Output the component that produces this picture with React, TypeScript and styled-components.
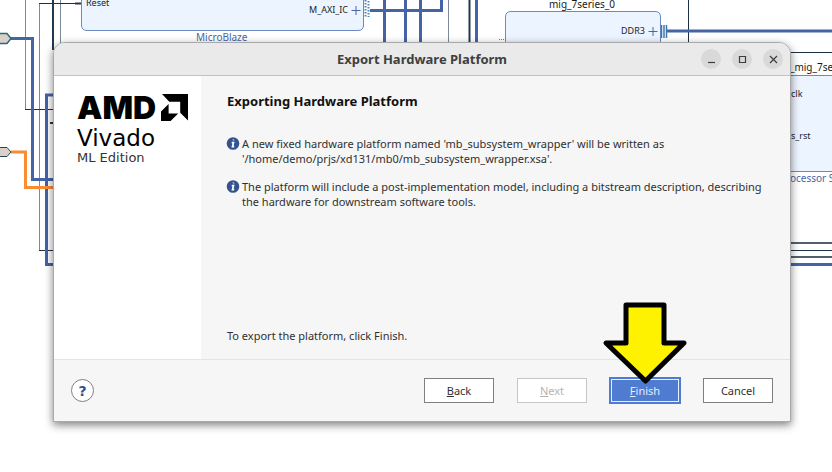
import React from "react";
import styled, { createGlobalStyle, css } from "styled-components";

const sans = `"Noto Sans", "Open Sans", sans-serif`;

const GlobalStyle = createGlobalStyle`
  *, *::before, *::after { box-sizing: border-box; }
  body { margin: 0; background: #fff; font-family: ${sans}; }
  p, h1, h2 { margin: 0; }
`;

const Desktop = styled.main`
  position: relative;
  min-height: 100vh;
  padding: 42px 41px 50px 53px;
  overflow: hidden;
  background: #fff;
`;

const Diagram = styled.svg`
  position: absolute;
  inset: 0;
  width: 100%;
  height: 100%;
  font-family: ${sans};
`;

const Wire = styled.path<{ $tone: "bus" | "net" | "soft" | "thick" | "slate" | "orange" }>`
  fill: none;
  ${({ $tone }) =>
    ({
      bus: css`stroke: #4464a6; stroke-width: 3;`,
      net: css`stroke: #1d2f42; stroke-width: 1;`,
      soft: css`stroke: #7d8a97; stroke-width: 1;`,
      thick: css`stroke: #22384f; stroke-width: 2;`,
      slate: css`stroke: #53606b; stroke-width: 2;`,
      orange: css`stroke: #fa8c32; stroke-width: 3;`,
    })[$tone]}
`;

const Block = styled.path`
  fill: #ecf4ff;
  stroke: #6c8ac2;
`;

const PinText = styled.text`
  font-size: 9px;
  fill: #222;
`;

const NameText = styled.text<{ $blue?: boolean }>`
  font-size: 10px;
  fill: ${({ $blue }) => ($blue ? "#4a66a8" : "#1a1a1a")};
`;

const Dialog = styled.section`
  position: relative;
  display: flex;
  flex-direction: column;
  min-height: 380px;
  border: 1px solid #a9a9a9;
  border-radius: 12px 12px 0 0;
  background: #f6f6f6;
  box-shadow: 0 3px 8px rgba(0, 0, 0, 0.5);
  color: #303030;
`;

const TitleBar = styled.header`
  display: grid;
  grid-template-columns: 1fr auto 1fr;
  align-items: center;
  height: 33px;
  padding: 0 7px;
  border-bottom: 1px solid #c3c3c3;
  border-radius: 11px 11px 0 0;
  background: #eaeaea;
`;

const Title = styled.h1`
  grid-column: 2;
  font-size: 13px;
  line-height: 20px;
  font-weight: 700;
  color: #404040;
`;

const WindowControls = styled.div`
  display: flex;
  justify-content: flex-end;
  gap: 11px;
`;

const WindowButton = styled.button`
  display: grid;
  place-items: center;
  width: 20px;
  height: 20px;
  padding: 0;
  border: 0;
  border-radius: 50%;
  background: #d9d9d9;
`;

const Body = styled.div`
  display: flex;
  flex: 1;
`;

const Sidebar = styled.aside`
  flex: none;
  width: 147px;
  padding: 18px 12px 0 23px;
  background: #fff;
  color: #000;
`;

const Brand = styled.div`
  display: flex;
  align-items: center;
  gap: 5px;
  height: 27px;
  font: 900 32px/27px Inter, sans-serif;
`;

const Product = styled.div`
  margin-top: 4px;
  font: 400 23px/27px "DejaVu Sans", sans-serif;
`;

const Edition = styled.div`
  font: 400 13px/12px "DejaVu Sans", sans-serif;
  color: #333;
`;

const Content = styled.div`
  display: flex;
  flex: 1;
  flex-direction: column;
  padding: 16px 19px 16px 26px;
  font-size: 11px;
  line-height: 15px;
`;

const Heading = styled.h2`
  margin-bottom: 26px;
  font-size: 13px;
  line-height: 18px;
  font-weight: 700;
  color: #111;
`;

const Message = styled.div`
  display: flex;
  gap: 1px;
  margin-bottom: 13px;
`;

const InfoIcon = styled.svg`
  flex: none;
  width: 14px;
  height: 15px;
  overflow: visible;
`;

const Hint = styled.p`
  margin-top: auto;
`;

const Footer = styled.footer`
  display: flex;
  align-items: center;
  justify-content: space-between;
  height: 62px;
  padding: 0 17px;
  border-top: 1px solid #e4e4e4;
`;

const HelpButton = styled.button`
  width: 23px;
  height: 23px;
  padding: 0;
  border: 1px solid #808080;
  border-radius: 50%;
  background: #fff;
  color: #34508c;
  font: 700 14px/20px "DejaVu Sans", sans-serif;
`;

const Actions = styled.div`
  display: flex;
  gap: 23px;
`;

const ActionButton = styled.button<{ $primary?: boolean }>`
  width: 70px;
  height: 25px;
  padding: 0;
  border: 1px solid #808080;
  background: #fff;
  color: #303030;
  font: 400 11px/15px ${sans};

  &:disabled {
    border-color: #c6c6c6;
    color: #b4b4b4;
  }

  ${({ $primary }) =>
    $primary &&
    css`
      border-color: #4f7bd0;
      background: #4f7bd0;
      box-shadow: 0 0 0 1px #4f7bd0, inset 0 0 0 1px #e8effb;
      color: #e6edfa;
    `}
`;

const Callout = styled.div`
  position: relative;
`;

const Arrow = styled.svg`
  position: absolute;
  right: -8px;
  bottom: 17px;
  width: 86px;
  height: 86px;
  pointer-events: none;
`;

const BlockDiagram = () => (
  <Diagram aria-label="Block design">
    <Wire $tone="soft" d="M25.5 0V109M39.5 4V250M60.5 0V44M448.5 0V44" />
    <Wire $tone="net" d="M39 3.5H81M25 109.5H54M39 250.5H54M688.5 0V44M788 52.5H2000M788 250.5H2000" />
    <Wire $tone="thick" d="M53 0V50M75 3.5H81M469.5 0V44M50 123H54" />
    <Wire $tone="bus" d="M11 38.5H32.5V179.5H54M54 95H46.5V264.5H54M667 31H2000M788 264.5H2000" />
    <Wire $tone="bus" d="M370 10.5H441.5V0M384.5 0V44M405.5 0V44M420.5 0V44M476.5 0V44" />
    <Wire $tone="slate" d="M788 243H2000M788 257H2000" />
    <Wire $tone="orange" d="M11 152H25.5V187.5H54" />
    <path d="M-1 33.500H7L11 38.500L7 43.500H-1Z" fill="#d9d0ca" stroke="#2f6872" strokeWidth="1.500" />
    <path d="M-1 147.500H7L11 152L7 156.500H-1Z" fill="#d9d0ca" stroke="#294553" />

    <Block d="M81.500 -5V25Q81.500 30.500 87 30.500H358Q363.500 30.500 363.500 25V-5Z" />
    <PinText x="86" y="6">Reset</PinText>
    <PinText x="309" y="13">M_AXI_IC</PinText>
    <path d="M365.500 0V17M368.500 1V17" stroke="#4f86b8" strokeWidth="2" strokeDasharray="1.500 1.500" />
    <NameText $blue x="196" y="41">MicroBlaze</NameText>

    <path d="M499 39.500H504" stroke="#4f86b8" strokeDasharray="1 1" />
    <NameText x="549" y="8">mig_7series_0</NameText>
    <Block d="M505.500 50V17Q505.500 11.500 511 11.500H655Q660.500 11.500 660.500 17V50Z" />
    <PinText x="621" y="34">DDR3</PinText>
    <path d="M351.500 10.500H360.500M356 6V15M648.500 31.500H657.500M653 27V36" stroke="#4966a5" />
    <path d="M661.500 25V38M664 25V38M666.500 25V38" stroke="#3f77ad" strokeWidth="1.500" />

    <Block d="M780 75.500H2000V171.500H780Z" />
    <NameText x="790" y="71">_mig_7se</NameText>
    <PinText x="791" y="97">clk</PinText>
    <PinText x="791" y="139">s_rst</PinText>
    <NameText $blue x="790" y="182">ocessor S</NameText>
  </Diagram>
);

const Info = () => (
  <InfoIcon viewBox="0 0 14 15" aria-hidden="true">
    <circle cx="6" cy="7.500" r="6.300" fill="#34528f" />
    <path d="M6.300 4.300L6.600 3.600M4.700 6.600H6.500L5.500 10.600H7.200" fill="none" stroke="#fff" strokeWidth="1.700" />
  </InfoIcon>
);

const messages = [
  "A new fixed hardware platform named 'mb_subsystem_wrapper' will be written as '/home/demo/prjs/xd131/mb0/mb_subsystem_wrapper.xsa'.",
  "The platform will include a post-implementation model, including a bitstream description, describing the hardware for downstream software tools.",
];

const controls = [
  { label: "Minimize", path: "M3 9.500H10" },
  { label: "Maximize", path: "M3.500 3.500H9.500V9.500H3.500Z" },
  { label: "Close", path: "M3 3L10 10M10 3L3 10" },
];

export default function App() {
  return (
    <>
      <GlobalStyle />
      <Desktop>
        <BlockDiagram />
        <Dialog role="dialog" aria-labelledby="dialog-title">
          <TitleBar>
            <Title id="dialog-title">Export Hardware Platform</Title>
            <WindowControls>
              {controls.map(({ label, path }) => (
                <WindowButton key={label} type="button" aria-label={label}>
                  <svg width="13" height="13" viewBox="0 0 13 13" aria-hidden="true">
                    <path d={path} fill="none" stroke="#3d3d3d" strokeWidth="1.200" />
                  </svg>
                </WindowButton>
              ))}
            </WindowControls>
          </TitleBar>
          <Body>
            <Sidebar>
              <Brand>
                AMD
                <svg width="27" height="27" viewBox="0 0 27 27" aria-hidden="true">
                  <path d="M1 0H27V26.500L19.200 18.700V7.800H8.300Z" />
                  <path d="M7.600 10L0 17.600V27H9.600L17.200 19.400H7.600Z" />
                </svg>
              </Brand>
              <Product>Vivado</Product>
              <Edition>ML Edition</Edition>
            </Sidebar>
            <Content>
              <Heading>Exporting Hardware Platform</Heading>
              {messages.map((text) => (
                <Message key={text}>
                  <Info />
                  <p>{text}</p>
                </Message>
              ))}
              <Hint>To export the platform, click Finish.</Hint>
            </Content>
          </Body>
          <Footer>
            <HelpButton type="button" aria-label="Help">?</HelpButton>
            <Actions>
              <ActionButton type="button"><u>B</u>ack</ActionButton>
              <ActionButton type="button" disabled><u>N</u>ext</ActionButton>
              <Callout>
                <ActionButton type="button" $primary><u>F</u>inish</ActionButton>
                <Arrow viewBox="0 0 86 86" aria-hidden="true">
                  <path
                    d="M24 5H62V43H82L43.500 81L4 43H24Z"
                    fill="#fff200"
                    stroke="#000"
                    strokeWidth="5"
                    strokeLinejoin="round"
                  />
                </Arrow>
              </Callout>
              <ActionButton type="button">Cancel</ActionButton>
            </Actions>
          </Footer>
        </Dialog>
      </Desktop>
    </>
  );
}
